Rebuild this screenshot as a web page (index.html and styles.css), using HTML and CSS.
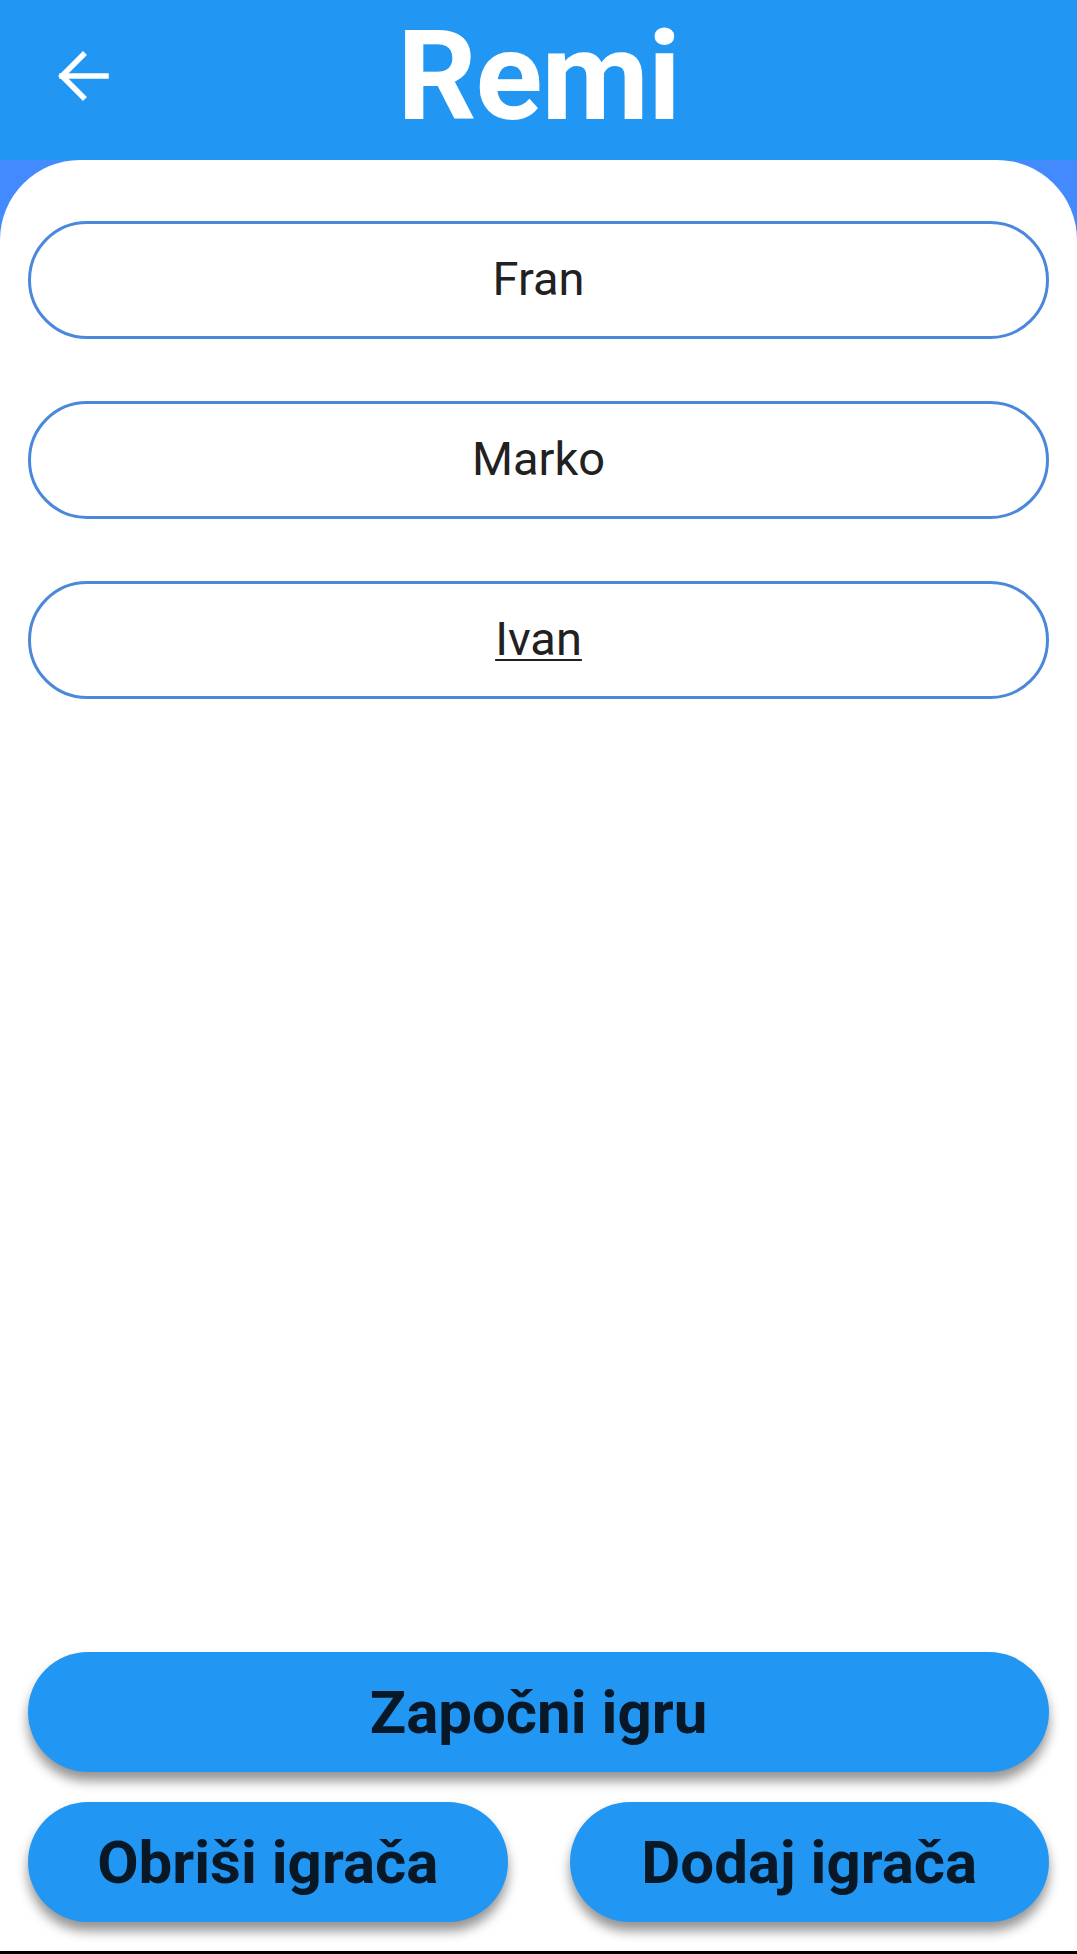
FILE: index.html
```html
<!DOCTYPE html>
<html lang="hr">
<head>
<meta charset="utf-8">
<title>Remi</title>
<link rel="stylesheet" href="styles.css">
</head>
<body>
<div class="app">
  <header class="topbar">
    <button class="back" aria-label="Natrag">
      <svg width="56" height="56" viewBox="0 0 56 56" fill="none" stroke="#ffffff" stroke-width="5.5" stroke-linecap="square">
        <path d="M7 26 H51"/>
        <path d="M28 5 L7 26 L28 47"/>
      </svg>
    </button>
    <h1 class="title">Remi</h1>
    <div class="spacer"></div>
  </header>
  <main class="stage">
    <section class="panel">
      <div class="fields">
        <div class="field">Fran</div>
        <div class="field">Marko</div>
        <div class="field"><span class="focused">Ivan</span></div>
      </div>
      <div class="actions">
        <button class="btn btn-wide">Započni igru</button>
        <div class="row">
          <button class="btn">Obriši igrača</button>
          <button class="btn">Dodaj igrača</button>
        </div>
      </div>
    </section>
  </main>
  <div class="navline"></div>
</div>
</body>
</html>
```

FILE: styles.css
```css
html, body {
  margin: 0;
  padding: 0;
  background: #ffffff;
}
body {
  font-family: Roboto, "Noto Sans", "Liberation Sans", sans-serif;
}
.app {
  height: 1954px;
  display: flex;
  flex-direction: column;
}
.topbar {
  height: 160px;
  flex: 0 0 160px;
  background: #2196F3;
  display: grid;
  grid-template-columns: 1fr auto 1fr;
  align-items: center;
}
.back {
  justify-self: start;
  margin-left: 55px;
  margin-top: -4px;
  padding: 0;
  border: 0;
  background: transparent;
  width: 56px;
  height: 56px;
  display: flex;
}
.title {
  margin: 0;
  color: #ffffff;
  font-family: Roboto, "Noto Sans", sans-serif;
  font-weight: 700;
  font-size: 124px;
  line-height: 124px;
  letter-spacing: -1px;
  margin-top: -6px;
}
.stage {
  flex: 1;
  background: #448AFF;
  display: flex;
}
.panel {
  flex: 1;
  background: #ffffff;
  border-radius: 80px 80px 0 0;
  padding: 61px 28px 29px 28px;
  display: flex;
  flex-direction: column;
  justify-content: space-between;
}
.fields {
  display: flex;
  flex-direction: column;
  gap: 62px;
}
.field {
  height: 118px;
  box-sizing: border-box;
  border: 3px solid #4A88DB;
  border-radius: 60px;
  display: flex;
  align-items: center;
  justify-content: center;
  font-size: 47px;
  color: #212121;
  padding-bottom: 4px;
}
.focused {
  text-decoration: underline;
  text-decoration-thickness: 2px;
  text-underline-offset: 4px;
}
.actions {
  display: flex;
  flex-direction: column;
  gap: 30px;
}
.row {
  display: flex;
  gap: 62px;
}
.btn {
  flex: 1;
  height: 120px;
  border: 0;
  border-radius: 60px;
  background: #2196F3;
  color: #081826;
  font-family: Roboto, "Noto Sans", sans-serif;
  font-weight: 700;
  font-size: 60px;
  box-shadow: 0 9px 12px rgba(0, 0, 0, 0.42);
  padding: 0;
}
.btn-wide {
  flex: none;
  width: 100%;
}
.navline {
  height: 3px;
  flex: 0 0 3px;
  background: #000000;
}
```
